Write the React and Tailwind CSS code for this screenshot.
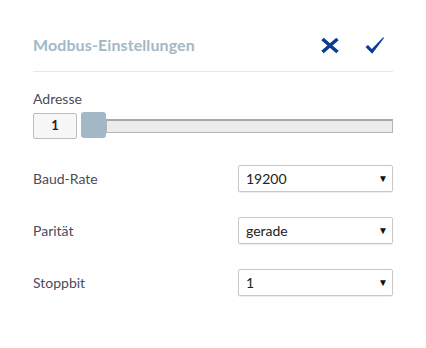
import { useState } from "react";

const ROWS = [
  { label: "Baud-Rate", value: "19200", options: ["9600", "19200", "38400", "57600", "115200"] },
  { label: "Parität", value: "gerade", options: ["keine", "gerade", "ungerade"] },
  { label: "Stoppbit", value: "1", options: ["1", "2"] },
];

const CloseIcon = () => (
  <svg width="20" height="17" viewBox="0 0 20 17">
    <path d="M2.5 2 L17.5 15 M17.5 2 L2.5 15" stroke="#0b3b94" strokeWidth="3.6" fill="none" />
  </svg>
);

const CheckIcon = () => (
  <svg width="19" height="17" viewBox="0 0 19 17">
    <path d="M0.5 10 L3 8 L6.8 12 L18.2 0.3 L19 1 L7.2 16.8 Z" fill="#0b3b94" />
  </svg>
);

const App = () => {
  const [values, setValues] = useState(ROWS.map((r) => r.value));

  return (
    <div className="w-[426px] h-[348px] overflow-hidden bg-white px-[33px] pt-[24px] font-['Lato','Open_Sans',sans-serif]">
      {/* header */}
      <div className="h-[48px] pb-[5px] flex items-center justify-between border-b border-[#e8e8e8]">
        <h2 className="text-[16px] font-bold text-[#a3b8c6] tracking-[0.1px]">Modbus-Einstellungen</h2>
        <div className="flex items-center gap-[25px] pr-[9px]">
          <CloseIcon />
          <CheckIcon />
        </div>
      </div>

      {/* Adresse */}
      <div className="mt-[17px] text-[14px] leading-[20px] text-[#4b4b5c]">Adresse</div>
      <div className="mt-[2px] flex items-center h-[28px]">
        <div className="w-[44px] h-[26px] mt-[2px] border border-[#bdbdbd] rounded-[2px] bg-[#f7f7f7] flex items-center justify-center text-[13px] font-bold text-[#222]">
          1
        </div>
        <div className="ml-[4px] w-[25px] h-[26px] rounded-[3px] bg-[#a3b8c6]"></div>
        <div className="flex-1 h-[14px] mt-[1px] bg-[#ececec] border border-[#b5b5b5] border-t-2 border-t-[#a9a9a9]"></div>
      </div>

      {/* selects */}
      <div className="mt-[26px] flex flex-col gap-[25px]">
        {ROWS.map((row, i) => (
          <div key={row.label} className="flex items-center justify-between h-[27px]">
            <label className="text-[14px] text-[#4b4b5c]">{row.label}</label>
            <div className="relative w-[155px] h-[27px]">
              <select
                value={values[i]}
                onChange={(e) => setValues(values.map((v, j) => (j === i ? e.target.value : v)))}
                className="appearance-none w-full h-full border border-[#c8c8c8] rounded-[2px] bg-white pl-[7px] text-[14px] text-[#222] shadow-[0_1px_1px_rgba(0,0,0,0.08)] outline-none"
              >
                {row.options.map((o) => (
                  <option key={o} value={o}>{o}</option>
                ))}
              </select>
              <span className="absolute right-[5px] top-[6px] text-[10px] text-[#111] pointer-events-none">▼</span>
            </div>
          </div>
        ))}
      </div>
    </div>
  );
};

export default App;
